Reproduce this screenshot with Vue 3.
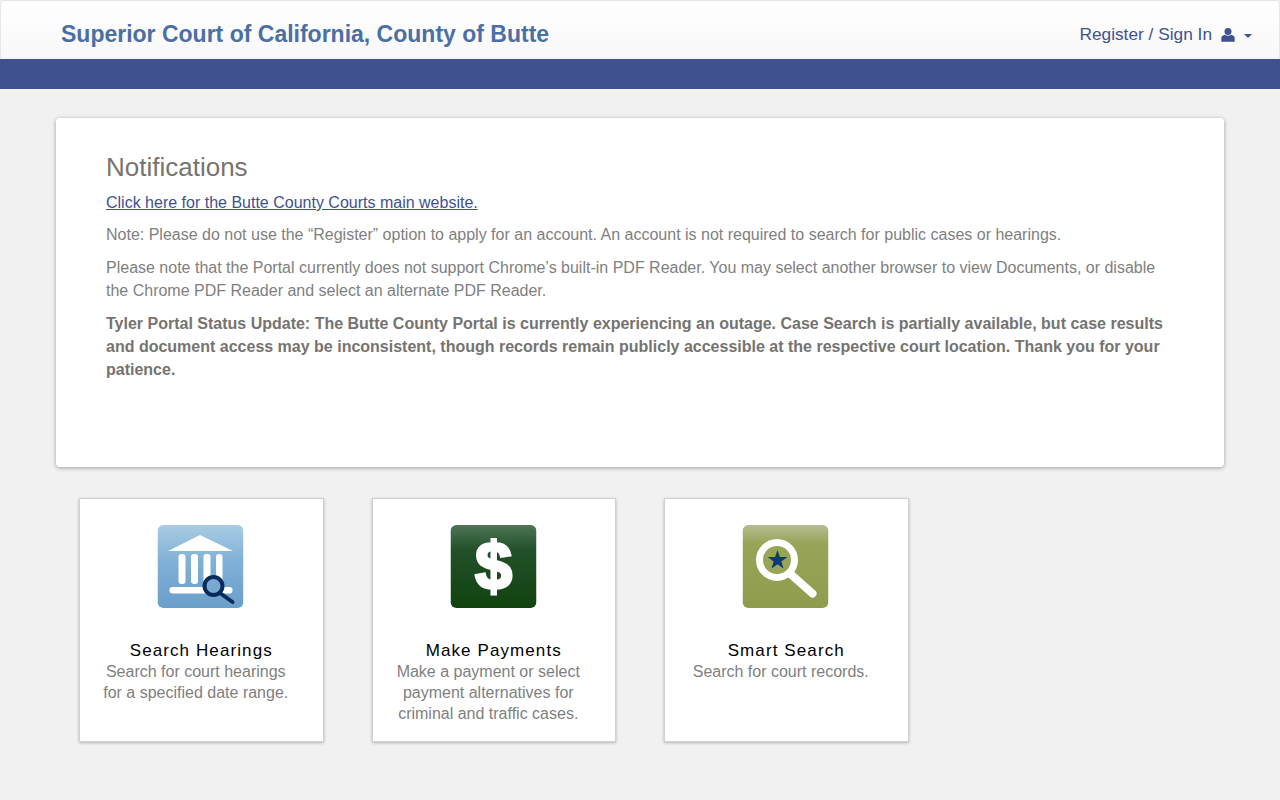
<script setup>
const cards = [
  { title: 'Search Hearings', icon: 'hearings', text: ['Search for court hearings', 'for a specified date range.'] },
  { title: 'Make Payments', icon: 'payments', text: ['Make a payment or select', 'payment alternatives for', 'criminal and traffic cases.'] },
  { title: 'Smart Search', icon: 'smart', text: ['Search for court records.'] }
]
</script>

<template>
  <div class="page">
    <header class="top">
      <a class="brand">Superior Court of California, County of Butte</a>
      <a class="user">
        <span>Register / Sign In</span>
        <svg class="person" viewBox="0 0 14 14" width="14" height="14">
          <circle cx="7" cy="3.6" r="3.5" fill="#3f5190" />
          <path d="M.3 13.8V10.2C.3 8.4 1.800 6.900 3.800 6.700 5.600 8.200 8.400 8.200 10.200 6.700 12.200 6.900 13.700 8.400 13.700 10.200V13.800Z" fill="#3f5190" />
        </svg>
        <i class="caret"></i>
      </a>
    </header>
    <div class="band"></div>

    <main class="content">
      <section class="panel">
        <h2>Notifications</h2>
        <p class="link-line"><a>Click here for the Butte County Courts main website.</a></p>
        <p>Note: Please do not use the “Register” option to apply for an account. An account is not required to search for public cases or hearings.</p>
        <p>Please note that the Portal currently does not support Chrome’s built-in PDF Reader. You may select another browser to view Documents, or disable the Chrome PDF Reader and select an alternate PDF Reader.</p>
        <p class="status">Tyler Portal Status Update: The Butte County Portal is currently experiencing an outage. Case Search is partially available, but case results and document access may be inconsistent, though records remain publicly accessible at the respective court location. Thank you for your patience.</p>
      </section>

      <div class="cards">
        <article v-for="card in cards" :key="card.title" class="card">
          <svg class="icon" viewBox="0 0 86 83" width="86" height="83">
            <defs>
              <linearGradient id="gradBlue" x1="0" y1="0" x2="0" y2="1">
                <stop offset="0" stop-color="#a9cce3" />
                <stop offset="0.45" stop-color="#7fb0d6" />
                <stop offset="1" stop-color="#6a9fcb" />
              </linearGradient>
              <linearGradient id="gradGreen" x1="0" y1="0" x2="0" y2="1">
                <stop offset="0" stop-color="#4f7556" />
                <stop offset="0.3" stop-color="#225029" />
                <stop offset="1" stop-color="#11430f" />
              </linearGradient>
              <linearGradient id="gradOlive" x1="0" y1="0" x2="0" y2="1">
                <stop offset="0" stop-color="#b5bd93" />
                <stop offset="0.22" stop-color="#98a458" />
                <stop offset="1" stop-color="#8f9c4c" />
              </linearGradient>
            </defs>

            <template v-if="card.icon === 'hearings'">
              <rect width="86" height="83" rx="6" fill="url(#gradBlue)" />
              <path d="M10.500 26 42.500 10 75.500 26Z" fill="#fff" />
              <rect x="21" y="29" width="7" height="30" rx="3" fill="#fff" />
              <rect x="33.500" y="29" width="7" height="30" rx="3" fill="#fff" />
              <rect x="46" y="29" width="7" height="30" rx="3" fill="#fff" />
              <rect x="58.500" y="29" width="6.500" height="30" rx="3" fill="#fff" />
              <rect x="12" y="62" width="63" height="6.500" rx="3" fill="#fff" />
              <circle cx="56" cy="61" r="9" fill="#77a9d1" stroke="#0a2c5c" stroke-width="4" />
              <path d="M62.500 68 75 77" stroke="#0a2c5c" stroke-width="4" stroke-linecap="round" />
            </template>

            <template v-else-if="card.icon === 'payments'">
              <rect width="86" height="83" rx="6" fill="url(#gradGreen)" />
              <text x="43" y="64" text-anchor="middle" class="dollar">$</text>
            </template>

            <template v-else>
              <rect width="86" height="83" rx="6" fill="url(#gradOlive)" />
              <circle cx="34.500" cy="35" r="17.500" fill="#98a458" stroke="#fff" stroke-width="7" />
              <path d="M48 49 70 68.500" stroke="#fff" stroke-width="8" stroke-linecap="round" />
              <path d="M35 25 37.400 32 44.800 32.100 38.900 36.500 41 43.500 35 39.300 29 43.500 31.100 36.500 25.200 32.100 32.600 32Z" fill="#0d3b73" />
            </template>
          </svg>
          <h3>{{ card.title }}</h3>
          <div class="desc">
            <div v-for="line in card.text" :key="line">{{ line }}</div>
          </div>
        </article>
      </div>
    </main>
  </div>
</template>

<style>
html, body {
  margin: 0;
  background: #f1f1f1;
}
</style>

<style scoped>
.page {
  font-family: "Liberation Sans", Arial, sans-serif;
  min-height: 800px;
  background: #f1f1f1;
  color: #7f7f7f;
}
.top {
  height: 58px;
  box-sizing: border-box;
  display: flex;
  justify-content: space-between;
  align-items: center;
  padding: 6px 27px 0 60px;
  background: linear-gradient(#ffffff, #f8f8f8);
  border: 1px solid #e7e7e7;
  border-bottom: none;
  border-radius: 4px 4px 0 0;
}
.brand {
  margin-top: 3px;
  font-size: 23px;
  font-weight: bold;
  color: #4a6fa5;
}
.user {
  display: flex;
  align-items: center;
  font-size: 17.3px;
  color: #3f5190;
  margin-top: 4px;
}
.person {
  margin-left: 9px;
}
.caret {
  margin-left: 9px;
  margin-top: 2px;
  border-top: 4px solid #3f5190;
  border-left: 4px solid transparent;
  border-right: 4px solid transparent;
}
.band {
  height: 30px;
  margin-top: 1px;
  background: #3f5190;
}
.content {
  padding: 29px 56px 0;
}
.panel {
  height: 349px;
  box-sizing: border-box;
  padding: 34px 50px 0;
  background: #fff;
  border-radius: 4px;
  box-shadow: 0 1px 4px rgba(0, 0, 0, 0.35);
  font-size: 16px;
  line-height: 23px;
}
.panel h2 {
  margin: 0;
  font-size: 26px;
  font-weight: normal;
  line-height: 30px;
  color: #77746f;
}
.panel p {
  margin: 0 0 10px;
}
.panel .link-line {
  margin: 9px 0 9px;
}
.link-line a {
  color: #3f5190;
  text-decoration: underline;
}
.panel .status {
  font-weight: bold;
  color: #757371;
}
.cards {
  display: flex;
  gap: 48px;
  margin: 31px 0 0 23px;
}
.card {
  width: 244.500px;
  height: 243.500px;
  box-sizing: border-box;
  padding-top: 26px;
  background: #fff;
  border: 1px solid #d0d0d0;
  box-shadow: 0 1px 3px rgba(0, 0, 0, 0.25);
  text-align: center;
}
.icon {
  display: block;
  margin: 0 auto;
  transform: translateX(-0.5px);
}
.dollar {
  font-family: "Liberation Sans", Arial, sans-serif;
  font-size: 66px;
  font-weight: bold;
  fill: #fff;
  stroke: #fff;
  stroke-width: 3px;
}
.card h3 {
  margin: 32px 0 0;
  font-size: 17px;
  font-weight: normal;
  line-height: 21px;
  letter-spacing: 1.1px;
  color: #000;
}
.desc {
  padding-right: 11px;
  font-size: 16px;
  line-height: 21px;
}
</style>
